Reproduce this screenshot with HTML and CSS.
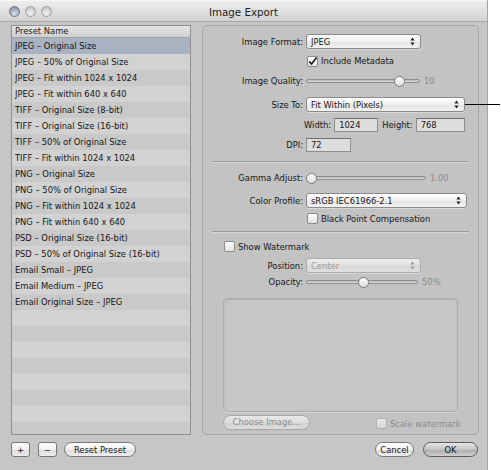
FILE: index.html
```html
<!DOCTYPE html>
<html>
<head>
<meta charset="utf-8">
<link rel="stylesheet" href="styles.css">
</head>
<body>
<div class="window">
  <div class="titlebar">
    <div class="lights"><span class="light l1"></span><span class="light"></span><span class="light"></span></div>
    <div class="title">Image Export</div>
    <div></div>
  </div>
  <div class="body">
    <div class="list">
      <div class="list-head">Preset Name</div>
      <div class="rows">
        <div class="row sel">JPEG – Original Size</div>
        <div class="row">JPEG – 50% of Original Size</div>
        <div class="row">JPEG – Fit within 1024 x 1024</div>
        <div class="row">JPEG – Fit within 640 x 640</div>
        <div class="row">TIFF – Original Size (8-bit)</div>
        <div class="row">TIFF – Original Size (16-bit)</div>
        <div class="row">TIFF – 50% of Original Size</div>
        <div class="row">TIFF – Fit within 1024 x 1024</div>
        <div class="row">PNG – Original Size</div>
        <div class="row">PNG – 50% of Original Size</div>
        <div class="row">PNG – Fit within 1024 x 1024</div>
        <div class="row">PNG – Fit within 640 x 640</div>
        <div class="row">PSD – Original Size (16-bit)</div>
        <div class="row">PSD – 50% of Original Size (16-bit)</div>
        <div class="row">Email Small – JPEG</div>
        <div class="row">Email Medium – JPEG</div>
        <div class="row">Email Original Size – JPEG</div>
        <div class="row"></div><div class="row"></div><div class="row"></div><div class="row"></div>
        <div class="row"></div><div class="row"></div><div class="row"></div><div class="row"></div>
      </div>
    </div>

    <div class="panel">
      <div class="frow r1"><span class="lbl">Image Format:</span>
        <div class="popup w115"><span>JPEG</span><svg class="arr" width="5" height="9" viewBox="0 0 5 9"><path d="M2.5 0.5 L4.6 3.4 H0.4 Z M2.5 8.5 L4.6 5.6 H0.4 Z" fill="#222"/></svg></div>
      </div>
      <div class="frow r2 indent"><span class="cb checked"><svg width="11" height="11" viewBox="0 0 11 11"><path d="M2.3 5.4 L4.5 8 L9.6 1.4" stroke="#1a1a1a" stroke-width="1.6" fill="none"/></svg></span><span class="cbl">Include Metadata</span></div>
      <div class="frow r3"><span class="lbl">Image Quality:</span>
        <div class="slider w114"><div class="track"></div><span class="knob" style="left:82%"></span></div><span class="val">10</span>
      </div>
      <div class="frow r4"><span class="lbl">Size To:</span>
        <div class="popup w159"><span>Fit Within (Pixels)</span><svg class="arr" width="5" height="9" viewBox="0 0 5 9"><path d="M2.5 0.5 L4.6 3.4 H0.4 Z M2.5 8.5 L4.6 5.6 H0.4 Z" fill="#222"/></svg></div>
      </div>
      <div class="frow r5 wh"><span>Width:</span><div class="field w44">1024</div><span class="hl">Height:</span><div class="field w49">768</div></div>
      <div class="frow r6"><span class="lbl">DPI:</span><div class="field w45">72</div></div>
      <div class="sep s1"></div>
      <div class="frow r7"><span class="lbl">Gamma Adjust:</span>
        <div class="slider w120"><div class="track"></div><span class="knob" style="left:4%"></span></div><span class="val">1.00</span>
      </div>
      <div class="frow r8"><span class="lbl">Color Profile:</span>
        <div class="popup w161"><span>sRGB IEC61966-2.1</span><svg class="arr" width="5" height="9" viewBox="0 0 5 9"><path d="M2.5 0.5 L4.6 3.4 H0.4 Z M2.5 8.5 L4.6 5.6 H0.4 Z" fill="#222"/></svg></div>
      </div>
      <div class="frow r9 indent"><span class="cb"></span><span class="cbl">Black Point Compensation</span></div>
      <div class="sep s2"></div>
      <div class="frow r10 wm"><span class="cb"></span><span class="cbl">Show Watermark</span></div>
      <div class="frow r11"><span class="lbl">Position:</span>
        <div class="popup w115 dis"><span>Center</span><svg class="arr" width="5" height="9" viewBox="0 0 5 9"><path d="M2.5 0.5 L4.6 3.4 H0.4 Z M2.5 8.5 L4.6 5.6 H0.4 Z" fill="#9a9a9a"/></svg></div>
      </div>
      <div class="frow r12"><span class="lbl">Opacity:</span>
        <div class="slider w112"><div class="track"></div><span class="knob" style="left:51%"></span></div><span class="val">50%</span>
      </div>
      <div class="well"></div>
      <div class="frow r13">
        <div class="btn choose">Choose Image...</div>
        <div class="scale"><span class="cb dcb"></span><span class="cbl dtext">Scale watermark</span></div>
      </div>
    </div>

    <div class="lbtns">
      <div class="btn sq">+</div>
      <div class="btn sq">−</div>
      <div class="btn reset">Reset Preset</div>
    </div>
    <div class="rbtns">
      <div class="btn cancel">Cancel</div>
      <div class="btn ok">OK</div>
    </div>
  </div>
</div>
<div class="callout"></div>
</body>
</html>
```
FILE: styles.css
```css
* { box-sizing: border-box; margin: 0; padding: 0; }
html, body { background: #ffffff; }
body {
  margin: 0;
  width: 501px;
  height: 470px;
  overflow: hidden;
  position: relative;
  font-family: "DejaVu Sans", sans-serif;
  font-size: 8.4px;
  color: #151515;
}
.window {
  width: 488px;
  height: 470px;
  background: #c6c6c6;
  border-right: 1px solid #a4a4a4;
  display: flex;
  flex-direction: column;
}
.titlebar {
  height: 22px;
  flex: none;
  background: linear-gradient(#eeeeee, #d2d2d2);
  border-top: 1px solid #f7f7f7;
  border-bottom: 1px solid #a9a9a9;
  display: grid;
  grid-template-columns: 1fr auto 1fr;
  align-items: center;
}
.lights { display: flex; gap: 5px; padding-left: 9px; }
.light {
  width: 11px; height: 11px; border-radius: 50%;
  background: radial-gradient(circle at 50% 70%, #f4f4f4, #c9c9c9 70%);
  border: 1px solid #9e9e9e;
}
.light.l1 {
  background: radial-gradient(circle at 50% 75%, #dfe4ea, #8f98a4 75%);
  border-color: #6d7581;
}
.title { font-size: 10.3px; color: #222; padding-top: 1px; }

.body {
  display: grid;
  grid-template-columns: 180px 277px;
  grid-template-rows: 410px 15px;
  column-gap: 11px;
  row-gap: 7px;
  padding: 3px 0 0 11px;
}
.list {
  border: 1px solid #8f8f8f;
  background: #cbcbcb;
  overflow: hidden;
}
.list-head {
  height: 12px;
  line-height: 11px;
  padding-left: 3px;
  background: linear-gradient(#e4e4e4, #d0d0d0);
  border-bottom: 1px solid #a3a3a3;
  color: #222;
}
.row {
  height: 16px;
  line-height: 16px;
  padding-left: 3px;
  white-space: nowrap;
  background: #c9c9c9;
}
.row:nth-child(even) { background: #d2d2d2; }
.row.sel { background: #a9b2c1; }

.panel {
  border: 1px solid #a8a8a8;
  border-radius: 5px;
  background: #c3c3c3;
  padding-top: 8px;
  display: flex;
  flex-direction: column;
}
.frow { display: flex; align-items: center; height: 15px; white-space: nowrap; }
.lbl { width: 100px; text-align: right; margin-right: 3px; flex: none; }
.indent { padding-left: 104px; }
.r2 { margin-top: 6px; height: 12px; }
.r3 { margin-top: 7px; height: 14px; }
.r4 { margin-top: 9px; }
.r5 { margin-top: 5px; }
.r6 { margin-top: 5px; }
.s1 { margin-top: 9px; }
.r7 { margin-top: 8px; height: 14px; }
.r8 { margin-top: 8px; }
.r9 { margin-top: 4px; height: 13px; }
.s2 { margin-top: 6px; }
.r10 { margin-top: 7px; height: 13px; }
.r11 { margin-top: 5px; }
.r12 { margin-top: 2px; height: 14px; }
.r13 { margin-top: 2px; height: 16px; padding-left: 20px; }
.wm { padding-left: 21px; }

.popup {
  height: 15px;
  border: 1px solid #8a8a8a;
  border-radius: 3px;
  background: linear-gradient(#ffffff, #f0f0f0 50%, #e4e4e4 51%, #f2f2f2);
  display: flex;
  align-items: center;
  justify-content: space-between;
  padding: 0 5px 0 4px;
  box-shadow: 0 1px 0 rgba(255,255,255,0.35);
}
.popup.dis { border-color: #adadad; color: #9a9a9a; background: linear-gradient(#ececec, #e0e0e0 50%, #d6d6d6 51%, #e0e0e0); }
.w115 { width: 115px; }
.w159 { width: 159px; }
.w161 { width: 161px; }

.cb {
  width: 11px; height: 11px; flex: none;
  border: 1px solid #8a8a8a;
  border-radius: 2px;
  background: linear-gradient(#ffffff, #e2e2e2);
  display: inline-flex;
}
.cb svg { margin: -1px; }
.cbl { margin-left: 3px; }
.dcb { border-color: #b0b0b0; background: linear-gradient(#e6e6e6, #d6d6d6); }
.dtext { color: #8c8c8c; }

.slider { position: relative; height: 11px; flex: none; display: flex; align-items: center; }
.w114 { width: 114px; }
.w120 { width: 120px; }
.w112 { width: 112px; }
.track {
  width: 100%; height: 4px;
  border: 1px solid #8d8d8d;
  border-radius: 2px;
  background: linear-gradient(#b5b5b5, #e0e0e0);
}
.knob {
  position: absolute; top: 0;
  width: 11px; height: 11px; margin-left: -5px;
  border-radius: 50%;
  border: 1px solid #7b7b7b;
  background: linear-gradient(#ffffff, #dcdcdc);
}
.val { margin-left: 4px; color: #8a8a8a; }

.wh { padding-left: 101px; }
.field {
  height: 14px;
  border: 1px solid #8e8e8e;
  border-top-color: #6f6f6f;
  background: #dddddd;
  padding-left: 4px;
  line-height: 12px;
  margin-left: 3px;
}
.w44 { width: 44px; }
.w49 { width: 49px; }
.w45 { width: 45px; margin-left: 0; }
.hl { margin-left: 4px; }

.sep {
  height: 2px;
  margin-left: 9px;
  margin-right: 9px;
  border-top: 1px solid #9a9a9a;
  border-bottom: 1px solid #d6d6d6;
}
.well {
  margin: 9px 0 0 20px;
  width: 235px;
  height: 114px;
  border: 1px solid #adadad;
  border-radius: 4px;
  background: #c6c6c6;
  box-shadow: inset 0 1px 2px rgba(0,0,0,0.12), 0 1px 0 #d4d4d4;
}

.btn {
  height: 15px;
  border: 1px solid #777777;
  border-radius: 8px;
  background: linear-gradient(#ffffff, #f0f0f0 50%, #dddddd 51%, #ededed);
  display: flex;
  align-items: center;
  justify-content: center;
  color: #151515;
  flex: none;
}
.choose {
  width: 87px;
  border-color: #a6a6a6;
  color: #8a8a8a;
  background: linear-gradient(#e8e8e8, #dddddd 50%, #d2d2d2 51%, #dcdcdc);
}
.scale { margin-left: 66px; display: flex; align-items: center; padding-top: 3px; }

.lbtns { display: flex; align-items: center; }
.sq { width: 19px; border-radius: 3px; margin-right: 8px; }
.sq + .sq { margin-right: 7px; }
.reset { width: 72px; }
.rbtns { display: flex; justify-content: flex-end; padding-right: 1px; }
.cancel { width: 39px; }
.ok {
  width: 55px; margin-left: 9px;
  border-color: #5c5c5c;
  background: linear-gradient(#e6e6e6, #c4c4c4 50%, #aaaaaa 51%, #cfcfcf);
}

.callout {
  position: absolute;
  left: 465px;
  top: 104px;
  width: 35px;
  height: 1px;
  background: #000;
}
```
